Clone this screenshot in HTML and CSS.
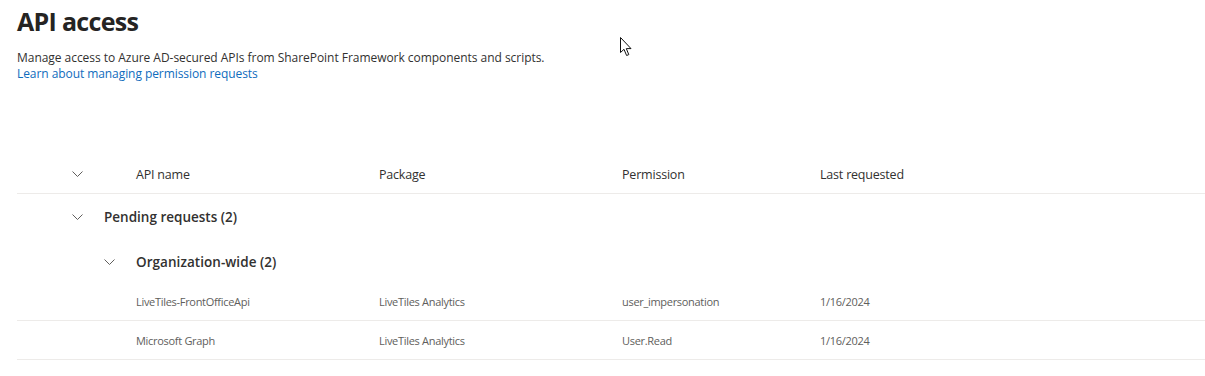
FILE: index.html
```html
<!DOCTYPE html>
<html lang="en">
<head>
<meta charset="utf-8">
<title>API access</title>
<link rel="stylesheet" href="styles.css">
</head>
<body>
<main class="page">
  <h1 class="title">API access</h1>
  <p class="desc">Manage access to Azure AD-secured APIs from SharePoint Framework components and scripts.<br><a class="link" href="#">Learn about managing permission requests</a></p>

  <div class="list">
    <div class="row head">
      <div class="cell expand"><svg class="chev" viewBox="0 0 11 6"><path d="M0.5 0.5 L5.5 5.5 L10.5 0.5"/></svg></div>
      <div class="cell">API name</div>
      <div class="cell">Package</div>
      <div class="cell">Permission</div>
      <div class="cell">Last requested</div>
    </div>

    <div class="group lvl1">
      <svg class="chev" viewBox="0 0 11 6"><path d="M0.5 0.5 L5.5 5.5 L10.5 0.5"/></svg>
      <span>Pending requests (2)</span>
    </div>
    <div class="group lvl2">
      <svg class="chev" viewBox="0 0 11 6"><path d="M0.5 0.5 L5.5 5.5 L10.5 0.5"/></svg>
      <span>Organization-wide (2)</span>
    </div>

    <div class="row item">
      <div class="cell expand"></div>
      <div class="cell">LiveTiles-FrontOfficeApi</div>
      <div class="cell">LiveTiles Analytics</div>
      <div class="cell">user_impersonation</div>
      <div class="cell">1/16/2024</div>
    </div>
    <div class="row item">
      <div class="cell expand"></div>
      <div class="cell">Microsoft Graph</div>
      <div class="cell">LiveTiles Analytics</div>
      <div class="cell">User.Read</div>
      <div class="cell">1/16/2024</div>
    </div>
  </div>

  <svg class="cursor" viewBox="0 0 13 20" width="13" height="20"><path d="M0.5 0.5 L0.5 15.5 L4 12.3 L6.6 18.5 L8.8 17.6 L6.3 11.6 L11 11.6 Z" fill="#fff" stroke="#111" stroke-width="1" stroke-linejoin="miter"/></svg>
</main>
</body>
</html>
```

FILE: styles.css
```css
html, body {
  margin: 0;
  background: #ffffff;
}

body {
  font-family: "Open Sans", "Noto Sans", "Liberation Sans", sans-serif;
  color: #323130;
}

.page {
  position: relative;
  padding: 0 0 0 17px;
  height: 376px;
  overflow: hidden;
}

.title {
  margin: 0;
  padding-top: 4px;
  font-size: 25px;
  line-height: 34px;
  font-weight: 700;
  letter-spacing: -0.7px;
  color: #252423;
}

.desc {
  margin: 12px 0 0;
  font-size: 12px;
  line-height: 16px;
  letter-spacing: -0.04px;
  color: #323130;
}

.link {
  color: #0f6cbd;
  text-decoration: none;
  letter-spacing: -0.07px;
}

.list {
  margin-top: 73px;
}

.row {
  display: grid;
  grid-template-columns: 119px 243px 243px 198px 1fr;
  align-items: center;
  border-bottom: 1px solid #edebe9;
}

.head {
  height: 38px;
  font-size: 12.5px;
  color: #323130;
  letter-spacing: -0.2px;
}

.expand {
  display: flex;
  padding-left: 55px;
}

.chev {
  width: 11px;
  height: 6px;
  flex: none;
  fill: none;
  stroke: #605e5c;
  stroke-width: 1;
}

.group {
  display: flex;
  align-items: center;
  box-sizing: border-box;
  height: 44px;
  font-size: 13.5px;
  font-weight: 600;
  color: #323130;
  letter-spacing: 0;
}

.group .chev {
  margin-right: 21px;
}

.lvl1 {
  padding-left: 55px;
  padding-top: 2px;
}

.lvl2 {
  padding-left: 87px;
  padding-top: 4px;
  letter-spacing: 0.05px;
}

.item {
  height: 38px;
  font-size: 11px;
  color: #605e5c;
  letter-spacing: -0.3px;
}

.cursor {
  position: absolute;
  left: 620px;
  top: 37px;
}
```
